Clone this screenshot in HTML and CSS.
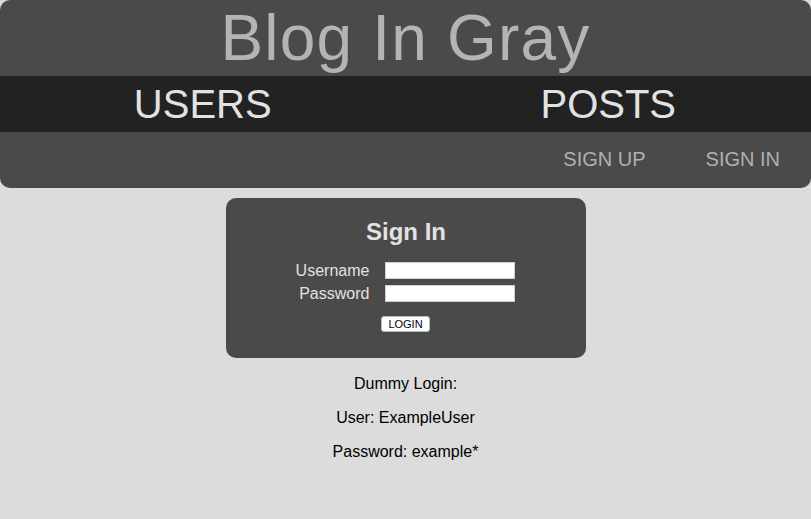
FILE: index.html
```html
<!DOCTYPE html>
<html lang="en">
<head>
<meta charset="utf-8">
<title>Blog In Gray</title>
<link rel="stylesheet" href="styles.css">
</head>
<body>
<header class="site-header">
  <h1 class="site-title">Blog In Gray</h1>
  <nav class="main-nav">
    <a class="main-link" href="#">USERS</a>
    <a class="main-link" href="#">POSTS</a>
  </nav>
  <nav class="sub-nav">
    <a class="sub-link" href="#">SIGN UP</a>
    <a class="sub-link" href="#">SIGN IN</a>
  </nav>
</header>
<main class="content">
  <form class="signin-card">
    <h2 class="signin-title">Sign In</h2>
    <div class="fields">
      <label class="field-label" for="username">Username</label>
      <input class="field-input" id="username" type="text">
      <label class="field-label" for="password">Password</label>
      <input class="field-input" id="password" type="password">
    </div>
    <button class="login-btn" type="button">LOGIN</button>
  </form>
  <div class="info">
    <p class="info-line">Dummy Login:</p>
    <p class="info-line">User: ExampleUser</p>
    <p class="info-line">Password: example*</p>
  </div>
</main>
</body>
</html>
```
FILE: styles.css
```css
* { box-sizing: border-box; }
html, body { margin: 0; padding: 0; }
body {
  background: #dcdcdc;
  font-family: "Liberation Sans", Arial, Helvetica, sans-serif;
  color: #000;
}
.site-header {
  background: #4a4a4a;
  border-radius: 10px;
  overflow: hidden;
}
.site-title {
  margin: 0;
  height: 76px;
  line-height: 76px;
  font-size: 64px;
  font-weight: normal;
  letter-spacing: 1.2px;
  text-align: center;
  color: #b4b4b4;
}
.main-nav {
  display: flex;
  height: 56px;
  background: #222222;
}
.main-link {
  flex: 1;
  text-align: center;
  line-height: 56px;
  font-size: 40px;
  color: #e2e2e2;
  text-decoration: none;
}
.sub-nav {
  display: flex;
  justify-content: flex-end;
  gap: 60px;
  height: 56px;
  padding-right: 31px;
}
.sub-link {
  line-height: 55px;
  font-size: 20px;
  color: #b0b0b0;
  text-decoration: none;
}
.content {
  display: flex;
  flex-direction: column;
  align-items: center;
  padding-top: 10px;
}
.signin-card {
  width: 360px;
  height: 160px;
  margin-left: 1px;
  background: #4a4a4a;
  border-radius: 10px;
  padding-top: 20px;
  display: flex;
  flex-direction: column;
  align-items: center;
}
.signin-title {
  margin: 0;
  font-size: 24px;
  line-height: 28px;
  font-weight: bold;
  color: #e2e2e2;
}
.fields {
  margin-top: 16px;
  margin-right: 1px;
  display: grid;
  grid-template-columns: auto 130px;
  column-gap: 16px;
  row-gap: 6px;
  align-items: center;
}
.field-label {
  text-align: right;
  font-size: 16px;
  line-height: 17px;
  color: #e2e2e2;
}
.field-input {
  width: 130px;
  height: 17px;
  margin: 0;
  padding: 0 2px;
  border: 1px solid #cfcfcf;
  background: #fff;
}
.login-btn {
  margin-top: 14px;
  margin-right: 1px;
  width: 49px;
  height: 16px;
  padding: 0;
  border: 1px solid #bbb;
  border-radius: 3px;
  background: #fff;
  font-family: "Liberation Sans", Arial, sans-serif;
  font-size: 11px;
  line-height: 14px;
  color: #000;
}
.info {
  margin-top: 17px;
  text-align: center;
}
.info-line {
  margin: 0 0 16px;
  font-size: 16px;
  line-height: 18px;
}
```
